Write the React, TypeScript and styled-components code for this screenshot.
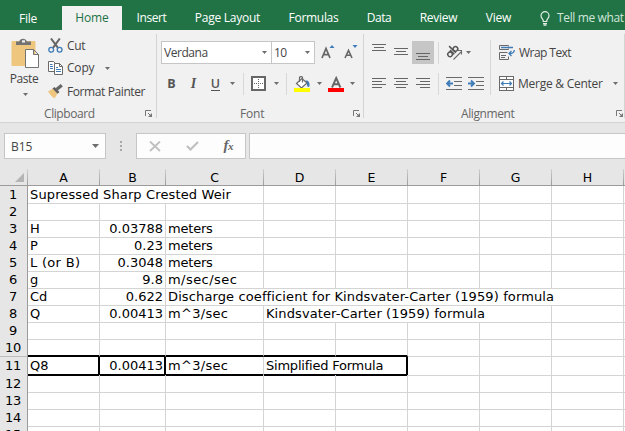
import React from "react";
import styled, { createGlobalStyle, css } from "styled-components";

const Global = createGlobalStyle`
  * { box-sizing: border-box; }
  html, body { margin: 0; padding: 0; overflow: hidden; background: #fff; }
  svg { display: block; flex: none; }
`;

const ui = `"Open Sans", "Noto Sans", sans-serif`;
const grey = "#6a6a6a";
const blue = "#3f7cb8";

const Window = styled.div`
  width: 625px;
  height: 431px;
  overflow: hidden;
  display: flex;
  flex-direction: column;
  background: #e6e6e6;
  font: 12px/16px ${ui};
  color: #444;
  white-space: nowrap;
`;

const Label = styled.span<{ $track?: number; $drop?: number }>`
  letter-spacing: ${(p) => p.$track ?? -0.3}px;
  padding-top: ${(p) => p.$drop ?? 0}px;
`;

/* ---------- tab strip ---------- */

const TabStrip = styled.nav`
  flex: none;
  height: 30px;
  padding-top: 6px;
  display: grid;
  grid-template-columns: 56px 6px 60px 59px 93px 79px 52px 67px 53px 1fr;
  background: #217346;
  color: #fff;
`;

const Tab = styled.div<{ $active?: boolean; $column?: number }>`
  display: flex;
  align-items: center;
  justify-content: center;
  height: 24px;
  ${(p) => p.$column && css`grid-column: ${p.$column};`}
  ${(p) => p.$active && css`background: #f1f1f1; color: #217346;`}
`;

const TellMe = styled.div`
  display: flex;
  align-items: center;
  gap: 7px;
  height: 24px;
  padding-left: 15px;
  color: #d3e5da;
`;

/* ---------- ribbon ---------- */

const Ribbon = styled.div`
  flex: none;
  display: flex;
  height: 93px;
  padding-top: 4px;
  background: #f1f1f1;
  border-bottom: 1px solid #d2d2d2;
`;

const Group = styled.section<{ $width: number }>`
  flex: none;
  width: ${(p) => p.$width}px;
  height: 84px;
  display: flex;
  flex-direction: column;
  border-right: 1px solid #d4d4d4;
`;

const GroupBody = styled.div`
  flex: none;
  height: 72px;
  display: flex;
`;

const GroupFooter = styled.div<{ $left: number; $right: number }>`
  flex: none;
  display: flex;
  justify-content: space-between;
  align-items: center;
  height: 16px;
  padding: 0 ${(p) => p.$right}px 0 ${(p) => p.$left}px;
  color: #666;
`;

const PasteButton = styled.div`
  width: 48px;
  padding: 4px 0 0 2px;
  display: flex;
  flex-direction: column;
  align-items: center;
`;

const PasteCaption = styled.div`
  margin: 2px 2px 6px 0;
  letter-spacing: -0.4px;
`;

const Commands = styled.div`
  display: flex;
  flex-direction: column;
`;

const Command = styled.div<{ $height?: number }>`
  display: flex;
  align-items: center;
  height: ${(p) => p.$height ?? 23}px;
  gap: 4px;
`;

const Rows = styled.div<{ $left: number }>`
  display: flex;
  flex-direction: column;
  gap: 8px;
  padding: 7px 0 0 ${(p) => p.$left}px;
`;

const ToolRow = styled.div`
  display: flex;
  align-items: center;
  height: 23px;
`;

const Tool = styled.div<{ $width: number; $pressed?: boolean }>`
  flex: none;
  display: flex;
  align-items: center;
  justify-content: center;
  width: ${(p) => p.$width}px;
  height: 23px;
  background: ${(p) => (p.$pressed ? "#c6c6c6" : "transparent")};
`;

const Combo = styled.div<{ $width: number; $joined?: boolean }>`
  display: flex;
  align-items: center;
  justify-content: space-between;
  width: ${(p) => p.$width}px;
  height: 23px;
  padding: 0 4px 0 2px;
  background: #fff;
  border: 1px solid #c6c6c6;
  ${(p) => p.$joined && css`border-left: 0;`}
`;

const Rule = styled.div<{ $height: number; $left?: number; $right?: number }>`
  flex: none;
  width: 1px;
  height: ${(p) => p.$height}px;
  margin: 0 ${(p) => p.$right ?? 0}px 0 ${(p) => p.$left ?? 0}px;
  background: #d8d8d8;
`;

const TallRule = styled(Rule)`
  margin-top: 6px;
`;

const Letter = styled.span<{ $kind: "bold" | "italic" | "under" }>`
  font-size: 12.5px;
  line-height: 14px;
  font-weight: 700;
  color: #555;
  ${(p) => p.$kind === "italic" && css`font-family: "Liberation Serif", serif; font-style: italic; font-size: 14px;`}
  ${(p) => p.$kind === "under" && css`font-weight: 600; border-bottom: 1px solid #555; line-height: 13px;`}
`;

/* ---------- formula bar ---------- */

const FormulaBar = styled.div`
  flex: none;
  display: flex;
  height: 46px;
  padding: 10px 0 10px 4px;
`;

const Field = styled.div<{ $width?: number }>`
  display: flex;
  align-items: center;
  height: 26px;
  flex: ${(p) => (p.$width ? "none" : "1")};
  width: ${(p) => (p.$width ? `${p.$width}px` : "auto")};
  background: #fdfdfd;
  border: 1px solid #c6c6c6;
`;

const NameBox = styled(Field)`
  justify-content: space-between;
  padding: 0 6px;
`;

const Grip = styled.div`
  width: 30px;
  display: flex;
  flex-direction: column;
  align-items: center;
  justify-content: center;
  gap: 2px;
`;

const Dot = styled.i`
  width: 2px;
  height: 2px;
  background: #a8a8a8;
`;

const EntryButtons = styled(Field)`
  justify-content: space-between;
  padding: 0 12px;
  margin-right: 3px;
`;

const InputField = styled(Field)`
  border-right: 0;
`;

/* ---------- sheet ---------- */

const columns = "28px 72px 66px 98px 72px 72px 72px 72px 72px 1fr";

const Sheet = styled.div`
  font: 13px/16px "DejaVu Sans", sans-serif;
  color: #000;
  background: #fff;
`;

const HeaderRow = styled.div`
  display: grid;
  grid-template-columns: ${columns};
  height: 17px;
  background: #e6e6e6;
  border-bottom: 1px solid #9b9b9b;
`;

const ColumnHead = styled.div`
  height: 16px;
  padding: 1px 1px 0 0;
  text-align: center;
  background: linear-gradient(#d0d0d0, #9b9b9b) right / 1px 100% no-repeat;
  font-size: 12.5px;
`;

const Corner = styled(ColumnHead)`
  display: flex;
  justify-content: flex-end;
  padding: 4px 4px 0 0;
`;

const SheetRow = styled.div<{ $height: number }>`
  display: grid;
  grid-template-columns: ${columns};
  height: ${(p) => p.$height}px;
`;

const RowHead = styled.div`
  padding: 1px 1px 0 0;
  text-align: center;
  background: #e6e6e6;
  border-right: 1px solid #9b9b9b;
  border-bottom: 1px solid #bdbdbd;
  letter-spacing: -0.3px;
`;

type Edge = "right" | "bottom";

const Cell = styled.div<{ $span: number; $number?: boolean; $track: number; $thick: Edge[] }>`
  grid-column: span ${(p) => p.$span};
  padding: 1px 2px 0 2px;
  text-align: ${(p) => (p.$number ? "right" : "left")};
  letter-spacing: ${(p) => p.$track}px;
  border: 0 solid #d4d4d4;
  border-width: 0 1px 1px 0;
  ${(p) => p.$thick.includes("right") && css`border-right: 2px solid #000;`}
  ${(p) => p.$thick.includes("bottom") && css`border-bottom: 2px solid #000;`}
  ${(p) => p.$number && p.$thick.includes("right") && css`padding-right: 1px;`}
`;

type CellData = { text?: string; span?: number; number?: boolean; track?: number; thick?: Edge[] };
type RowData = { height?: number; cells: CellData[] };

const blanks = (n: number, thick?: Edge[]): CellData[] => Array.from({ length: n }, () => ({ thick }));
const num = (text: string): CellData => ({ text, number: true, track: 0 });

const rows: RowData[] = [
  { cells: [{ text: "Supressed Sharp Crested Weir", span: 3, track: 0.13 }, ...blanks(6)] },
  { cells: blanks(9) },
  { cells: [{ text: "H" }, num("0.03788"), { text: "meters", track: -0.2 }, ...blanks(6)] },
  { cells: [{ text: "P" }, num("0.23"), { text: "meters", track: -0.2 }, ...blanks(6)] },
  { cells: [{ text: "L (or B)", track: 0.3 }, num("0.3048"), { text: "meters", track: -0.2 }, ...blanks(6)] },
  { cells: [{ text: "g" }, num("9.8"), { text: "m/sec/sec", track: 0.45 }, ...blanks(6)] },
  {
    cells: [
      { text: "Cd" },
      num("0.622"),
      { text: "Discharge coefficient for Kindsvater-Carter (1959) formula", span: 6, track: 0.12 },
      ...blanks(1),
    ],
  },
  {
    cells: [
      { text: "Q" },
      num("0.00413"),
      { text: "m^3/sec", track: 0.3 },
      { text: "Kindsvater-Carter (1959) formula", span: 4, track: 0.1 },
      ...blanks(2),
    ],
  },
  { cells: blanks(9) },
  { height: 18, cells: [...blanks(5, ["bottom"]), ...blanks(4)] },
  {
    height: 18,
    cells: [
      { text: "Q8", thick: ["right", "bottom"] },
      { ...num("0.00413"), thick: ["right", "bottom"] },
      { text: "m^3/sec", track: 0.3, thick: ["bottom"] },
      { text: "Simplified Formula", span: 2, track: -0.22, thick: ["right", "bottom"] },
      ...blanks(4),
    ],
  },
  { cells: blanks(9) },
  { cells: blanks(9) },
  { cells: blanks(9) },
  { cells: blanks(9) },
];

/* ---------- icons ---------- */

const Caret = ({ w = 5, h = 3 }: { w?: number; h?: number }) => (
  <svg width={w} height={h} viewBox="0 0 10 6" preserveAspectRatio="none">
    <path d="M0 0H10L5 6Z" fill="#6d6d6d" />
  </svg>
);

const Launcher = () => (
  <svg width="8" height="8" viewBox="0 0 8 8" fill="none" stroke="#777">
    <path d="M.5 6V.5H6M3 3l3 3" />
    <path d="M7 3v4H3z" fill="#777" stroke="none" />
  </svg>
);

const Bulb = () => (
  <svg width="10" height="15" viewBox="0 0 10 15" fill="none" stroke="#e2eee6" strokeWidth="1.2">
    <path d="M3.2 10.5V9.2C3 8 1 7 1 4.7a4 4 0 0 1 8 0C9 7 7 8 6.8 9.2v1.3z" />
    <path d="M3 12.6h4M3.5 14.2h3" />
  </svg>
);

const PasteIcon = () => (
  <svg width="29" height="31" viewBox="0 0 29 31">
    <rect x="0.5" y="3" width="24" height="25" rx="1" fill="#eec67e" />
    <path d="M5 7V3.5h3.2a4 4 0 0 1 7.6 0H20V7z" fill="#737373" />
    <rect x="11" y="2.3" width="3" height="2.2" fill="#f1f1f1" />
    <path d="M14.5 11.5h8l5 5v13h-13zM22.5 11.5v5h5" fill="#fff" stroke="#737373" />
  </svg>
);

const CutIcon = () => (
  <svg width="15" height="15" viewBox="0 0 15 15" fill="none">
    <path d="M3 0.5L10.2 10.2M11.8 0.5L4.8 10.2" stroke="#666" strokeWidth="2" />
    <circle cx="3.2" cy="11.8" r="2.4" stroke={blue} strokeWidth="1.3" />
    <circle cx="11.6" cy="11.8" r="2.4" stroke={blue} strokeWidth="1.3" />
  </svg>
);

const CopyIcon = () => (
  <svg width="15" height="14" viewBox="0 0 15 14" fill="#fff" stroke={grey}>
    <path d="M.5.5h5l2.5 2.5v7.500H.5z" />
    <path d="M2 3.500h2.500M2 5.500h3M2 7.500h3" stroke={blue} />
    <path d="M6.500 2.500h5l3 3v8h-8zM11.500 2.500v3h3" />
    <path d="M8 6.500h2M8 8.500h5M8 10.500h5" stroke={blue} />
  </svg>
);

const PainterIcon = () => (
  <svg width="15" height="15" viewBox="0 0 15 15">
    <path d="M0 7.500L5 4.500L9.500 9.500L6.500 14.500Q3 12.500 0 7.500z" fill="#eec67e" />
    <path d="M4.500 4.500L6.500 3L11.500 8L9.500 9.800z" fill="#5e5e5e" />
    <path d="M8.500 5.500L13.800 1.200" stroke="#666" strokeWidth="3.2" />
  </svg>
);

const SizeA = ({ grow }: { grow?: boolean }) => (
  <svg width="14" height="17" viewBox="0 0 14 17">
    {grow ? (
      <>
        <path d="M1 14L5 4.500L9 14M2.500 10.700h5" fill="none" stroke="#666" strokeWidth="1.700" />
        <path d="M8.500 4h5L11 1z" fill={blue} />
      </>
    ) : (
      <>
        <path d="M1 14L4.500 6.500L8 14M2.200 11.300h4.500" fill="none" stroke="#666" strokeWidth="1.600" />
        <path d="M8.500 1h5L11 4z" fill={blue} />
      </>
    )}
  </svg>
);

const BordersIcon = () => (
  <svg width="15" height="15" viewBox="0 0 15 15" fill="none" stroke="#666">
    <rect x="1" y="1" width="13" height="13" fill="#fff" strokeWidth="2" />
    <path d="M7.500 3v9M3 7.500h9" strokeDasharray="1 1" />
  </svg>
);

const FillIcon = () => (
  <svg width="16" height="16" viewBox="0 0 16 16">
    <path d="M11.500 4.500Q16 4 15.500 10Q15 11.500 13.500 10.500Z" fill={blue} />
    <path d="M2.500 7.500L8 2.500L13 7L7.500 12z" fill="#fff" stroke={grey} strokeWidth="1.200" />
    <path d="M5.500 6V1.200Q7 0 8.500 1.200V6.500" fill="none" stroke={grey} strokeWidth="1.200" />
    <rect y="12" width="16" height="4" fill="#ff0" />
  </svg>
);

const FontColorIcon = () => (
  <svg width="16" height="16" viewBox="0 0 16 16">
    <path d="M4 11.500L8.200 2L12.400 11.500M5.500 8.200h5.500" fill="none" stroke="#666" strokeWidth="1.900" />
    <rect y="12" width="16" height="4" fill="#f00" />
  </svg>
);

const lines = (ys: number[], spans: [number, number][]) =>
  ys.map((y, i) => `M${spans[i][0]} ${y + 0.5}H${spans[i][1]}`).join("");

const LinesIcon = ({ d }: { d: string }) => (
  <svg width="14" height="23" viewBox="0 0 14 23" fill="none" stroke="#666">
    <path d={d} />
  </svg>
);

const vertical: [number, number][] = [[0, 14], [2, 12], [0, 14]];
const rowsY = [6, 9, 12, 15];

const OrientationIcon = () => (
  <svg width="17" height="17" viewBox="0 0 17 17" fill="none" stroke="#555" strokeWidth="1.500">
    <g transform="rotate(-45 6 7)">
      <circle cx="2.300" cy="8" r="2.300" />
      <path d="M5.200 5v6" />
      <path d="M7.400 1.500v9.500" />
      <circle cx="9.900" cy="8" r="2.300" />
    </g>
    <path d="M7.500 15.500L15 8M11.500 6.500h4v4" stroke={grey} strokeWidth="1.100" />
  </svg>
);

const IndentIcon = ({ more }: { more?: boolean }) => (
  <svg width="16" height="13" viewBox="0 0 16 13" fill="none" stroke={grey}>
    <path d="M0 .5h16M8 4.500h8M8 8.500h8M0 12.500h16" />
    {more ? (
      <path d="M0 6.500h5M3 3.500l3 3l-3 3" stroke={blue} strokeWidth="1.900" />
    ) : (
      <path d="M7 6.500H2M4 3.500l-3 3l3 3" stroke={blue} strokeWidth="1.900" />
    )}
  </svg>
);

const WrapIcon = () => (
  <svg width="16" height="16" viewBox="0 0 16 16" fill="none" stroke={grey}>
    <path d="M9.500 3.500v1H.5v-4h9v1M8.500 7.500H.5v7h9v-3" />
    <path d="M2 10.500h5M2 12.500h4" />
    <path d="M2 2.500h12M15.300 5Q15.300 8.500 10.500 8.500M12.500 6l-2.500 2.500l2.500 2.500" stroke={blue} strokeWidth="1.300" />
  </svg>
);

const MergeIcon = () => (
  <svg width="15" height="15" viewBox="0 0 15 15" fill="none" stroke={grey}>
    <rect x=".5" y=".5" width="14" height="14" fill="#fff" />
    <path d="M0 3.500h15M0 11.500h15M7.500 1v2.500M7.500 11.500V14" />
    <path d="M2.500 7.500h10M4.500 5.500l-2 2l2 2M10.500 5.500l2 2l-2 2" stroke={blue} strokeWidth="1.200" />
  </svg>
);

const CancelIcon = () => (
  <svg width="12" height="11" viewBox="0 0 12 11">
    <path d="M1 .5L11 10M11 .5L1 10" stroke="#c0c0c0" strokeWidth="1.900" />
  </svg>
);

const AcceptIcon = () => (
  <svg width="13" height="10" viewBox="0 0 13 10" fill="none">
    <path d="M1 5L4.500 8.500L12 1" stroke="#c0c0c0" strokeWidth="2.200" />
  </svg>
);

const FxSign = styled.span`
  font: italic 700 15px/16px "Liberation Serif", serif;
  color: #666;
  letter-spacing: -0.5px;
  padding-bottom: 2px;
`;

const FxSmall = styled.span`
  font-size: 11px;
`;

/* ---------- page ---------- */

export default function App() {
  return (
    <Window>
      <Global />
      <TabStrip>
        <Tab><Label $track={-0.2} $drop={1}>File</Label></Tab>
        <Tab $active $column={3}><Label $track={-0.1}>Home</Label></Tab>
        <Tab><Label $track={-0.4}>Insert</Label></Tab>
        <Tab><Label $track={-0.25}>Page Layout</Label></Tab>
        <Tab><Label $track={-0.3}>Formulas</Label></Tab>
        <Tab><Label $track={-0.4}>Data</Label></Tab>
        <Tab><Label $track={-0.25}>Review</Label></Tab>
        <Tab><Label $track={-0.2}>View</Label></Tab>
        <TellMe>
          <Bulb />
          <Label $track={-0.36}>Tell me what</Label>
        </TellMe>
      </TabStrip>

      <Ribbon>
        <Group $width={157}>
          <GroupBody>
            <PasteButton>
              <PasteIcon />
              <PasteCaption>Paste</PasteCaption>
              <Caret />
            </PasteButton>
            <Commands>
              <Command $height={22}><CutIcon /><Label $drop={1}>Cut</Label></Command>
              <Command $height={24}>
                <CopyIcon /><Label $track={-0.2}>Copy</Label><Tool $width={18}><Caret /></Tool>
              </Command>
              <Command $height={22}><PainterIcon /><Label $track={-0.4} $drop={1}>Format Painter</Label></Command>
            </Commands>
          </GroupBody>
          <GroupFooter $left={44} $right={3}>
            <Label $track={-0.42}>Clipboard</Label>
            <Launcher />
          </GroupFooter>
        </Group>

        <Group $width={207}>
          <GroupBody>
            <Rows $left={4}>
              <ToolRow>
                <Combo $width={111}><Label $track={-0.45} $drop={1}>Verdana</Label><Caret /></Combo>
                <Combo $width={43} $joined><Label $track={-0.5} $drop={1}>10</Label><Caret /></Combo>
                <Tool $width={26}><SizeA grow /></Tool>
                <Tool $width={19}><SizeA /></Tool>
              </ToolRow>
              <ToolRow>
                <Tool $width={21}><Letter $kind="bold">B</Letter></Tool>
                <Tool $width={23}><Letter $kind="italic">I</Letter></Tool>
                <Tool $width={21}><Letter $kind="under">U</Letter></Tool>
                <Tool $width={13}><Caret /></Tool>
                <Rule $height={22} $left={4} $right={7} />
                <Tool $width={15}><BordersIcon /></Tool>
                <Tool $width={20}><Caret /></Tool>
                <Rule $height={22} $right={7} />
                <Tool $width={16}><FillIcon /></Tool>
                <Tool $width={18}><Caret /></Tool>
                <Tool $width={16}><FontColorIcon /></Tool>
                <Tool $width={17}><Caret /></Tool>
              </ToolRow>
            </Rows>
          </GroupBody>
          <GroupFooter $left={83} $right={2}>
            <Label $track={-0.2}>Font</Label>
            <Launcher />
          </GroupFooter>
        </Group>

        <Group $width={261}>
          <GroupBody>
            <Rows $left={4}>
              <ToolRow>
                <Tool $width={22}><LinesIcon d={lines([3, 6, 9], vertical)} /></Tool>
                <Tool $width={22}><LinesIcon d={lines([7, 10, 13], vertical)} /></Tool>
                <Tool $width={22} $pressed><LinesIcon d={lines([12, 15, 18], vertical)} /></Tool>
                <Rule $height={22} $left={4} $right={7} />
                <Tool $width={17}><OrientationIcon /></Tool>
                <Tool $width={11}><Caret /></Tool>
              </ToolRow>
              <ToolRow>
                <Tool $width={22}><LinesIcon d={lines(rowsY, [[0, 14], [0, 10], [0, 14], [0, 10]])} /></Tool>
                <Tool $width={22}><LinesIcon d={lines(rowsY, [[0, 14], [2, 12], [0, 14], [2, 12]])} /></Tool>
                <Tool $width={22}><LinesIcon d={lines(rowsY, [[0, 14], [4, 14], [0, 14], [4, 14]])} /></Tool>
                <Rule $height={22} $left={4} $right={7} />
                <Tool $width={16}><IndentIcon /></Tool>
                <Tool $width={28}><IndentIcon more /></Tool>
              </ToolRow>
            </Rows>
            <TallRule $height={55} $right={8} />
            <Rows $left={0}>
              <Command><WrapIcon /><Label $track={-0.55} $drop={1}>Wrap Text</Label></Command>
              <Command>
                <MergeIcon /><Label $track={-0.25} $drop={1}>Merge &amp; Center</Label><Tool $width={17}><Caret /></Tool>
              </Command>
            </Rows>
          </GroupBody>
          <GroupFooter $left={97} $right={0}>
            <Label $track={-0.4}>Alignment</Label>
            <Launcher />
          </GroupFooter>
        </Group>
      </Ribbon>

      <FormulaBar>
        <NameBox $width={102}><Label $track={0} $drop={1}>B15</Label><Caret w={7} h={4} /></NameBox>
        <Grip><Dot /><Dot /><Dot /></Grip>
        <EntryButtons $width={110}>
          <CancelIcon />
          <AcceptIcon />
          <FxSign>f<FxSmall>x</FxSmall></FxSign>
        </EntryButtons>
        <InputField />
      </FormulaBar>

      <Sheet>
        <HeaderRow>
          <Corner>
            <svg width="9" height="9" viewBox="0 0 9 9"><path d="M9 0V9H0z" fill="#b4b4b4" /></svg>
          </Corner>
          {"ABCDEFGH".split("").map((c) => <ColumnHead key={c}>{c}</ColumnHead>)}
        </HeaderRow>
        {rows.map((row, i) => (
          <SheetRow key={i} $height={row.height ?? 17}>
            <RowHead>{i + 1}</RowHead>
            {row.cells.map((c, j) => (
              <Cell key={j} $span={c.span ?? 1} $number={c.number} $track={c.track ?? 0} $thick={c.thick ?? []}>
                {c.text}
              </Cell>
            ))}
          </SheetRow>
        ))}
      </Sheet>
    </Window>
  );
}
